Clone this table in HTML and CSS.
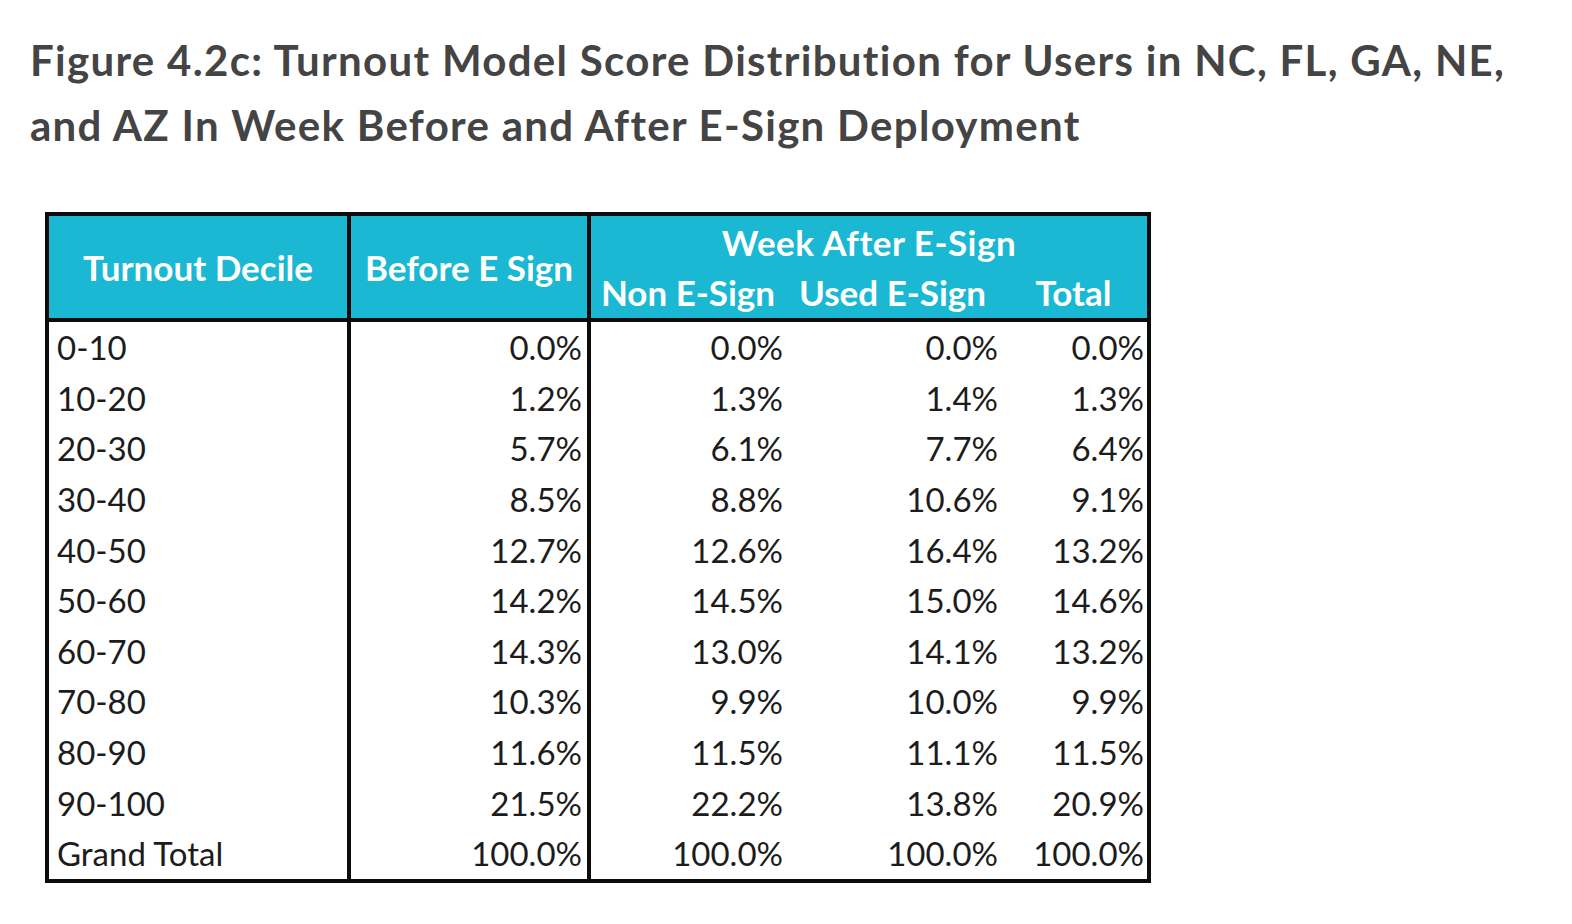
FILE: index.html
```html
<!DOCTYPE html>
<html lang="en">
<head>
<meta charset="utf-8">
<title>Figure 4.2c</title>
<link rel="stylesheet" href="styles.css">
</head>
<body>
<main class="page">
  <h1 class="title">Figure 4.2c: Turnout Model Score Distribution for Users in NC, FL, GA, NE, and AZ In Week Before and After E-Sign Deployment</h1>
  <table class="dist">
    <colgroup>
      <col class="c1"><col class="c2"><col class="c3"><col class="c4"><col class="c5">
    </colgroup>
    <thead>
      <tr class="h1">
        <th rowspan="2" class="sep">Turnout Decile</th>
        <th rowspan="2" class="sep">Before E Sign</th>
        <th colspan="3" class="group">Week After E-Sign</th>
      </tr>
      <tr class="h2">
        <th>Non E-Sign</th>
        <th>Used E-Sign</th>
        <th>Total</th>
      </tr>
    </thead>
    <tbody>
      <tr><td class="lbl sep">0-10</td><td class="sep n2">0.0%</td><td class="n3">0.0%</td><td class="n4">0.0%</td><td class="n5">0.0%</td></tr>
      <tr><td class="lbl sep">10-20</td><td class="sep n2">1.2%</td><td class="n3">1.3%</td><td class="n4">1.4%</td><td class="n5">1.3%</td></tr>
      <tr><td class="lbl sep">20-30</td><td class="sep n2">5.7%</td><td class="n3">6.1%</td><td class="n4">7.7%</td><td class="n5">6.4%</td></tr>
      <tr><td class="lbl sep">30-40</td><td class="sep n2">8.5%</td><td class="n3">8.8%</td><td class="n4">10.6%</td><td class="n5">9.1%</td></tr>
      <tr><td class="lbl sep">40-50</td><td class="sep n2">12.7%</td><td class="n3">12.6%</td><td class="n4">16.4%</td><td class="n5">13.2%</td></tr>
      <tr><td class="lbl sep">50-60</td><td class="sep n2">14.2%</td><td class="n3">14.5%</td><td class="n4">15.0%</td><td class="n5">14.6%</td></tr>
      <tr><td class="lbl sep">60-70</td><td class="sep n2">14.3%</td><td class="n3">13.0%</td><td class="n4">14.1%</td><td class="n5">13.2%</td></tr>
      <tr><td class="lbl sep">70-80</td><td class="sep n2">10.3%</td><td class="n3">9.9%</td><td class="n4">10.0%</td><td class="n5">9.9%</td></tr>
      <tr><td class="lbl sep">80-90</td><td class="sep n2">11.6%</td><td class="n3">11.5%</td><td class="n4">11.1%</td><td class="n5">11.5%</td></tr>
      <tr><td class="lbl sep">90-100</td><td class="sep n2">21.5%</td><td class="n3">22.2%</td><td class="n4">13.8%</td><td class="n5">20.9%</td></tr>
      <tr><td class="lbl sep">Grand Total</td><td class="sep n2">100.0%</td><td class="n3">100.0%</td><td class="n4">100.0%</td><td class="n5">100.0%</td></tr>
    </tbody>
  </table>
</main>
</body>
</html>
```

FILE: styles.css
```css
html, body {
  margin: 0;
  padding: 0;
  background: #ffffff;
}

.page {
  padding: 0 0 0 30px;
}

.title {
  margin: 0;
  padding-top: 28px;
  width: 1510px;
  font-family: Lato, "Open Sans", sans-serif;
  font-weight: 700;
  font-size: 42px;
  line-height: 65px;
  letter-spacing: 1.3px;
  color: #444444;
}

.dist {
  margin: 54px 0 0 15px;
  border-collapse: collapse;
  table-layout: fixed;
  width: 1102px;
  border: 4px solid #0c0c0c;
  font-family: Lato, "Open Sans", sans-serif;
  font-size: 33px;
  color: #1c1c1c;
}

.c1 { width: 302px; }
.c2 { width: 240px; }
.c3 { width: 196px; }
.c4 { width: 215px; }
.c5 { width: 149px; }

.dist thead {
  background: #1ab8d2;
  color: #ffffff;
  border-bottom: 4px solid #0c0c0c;
}

.dist th {
  font-weight: 700;
  font-size: 35px;
  padding: 0;
  text-align: center;
  white-space: nowrap;
}

.h1 th.group {
  height: 52px;
  vertical-align: middle;
  line-height: 40px;
  letter-spacing: 0.5px;
}

.h2 th {
  height: 50px;
  vertical-align: top;
  line-height: 48px;
}

.sep {
  border-right: 4px solid #0c0c0c;
}

.dist td {
  height: 50.6px;
  padding: 0;
  line-height: 50px;
  white-space: nowrap;
}

.lbl {
  text-align: left;
  padding-left: 8px !important;
}

.n2 { text-align: right; padding-right: 5px !important; }
.n3 { text-align: right; padding-right: 2px !important; }
.n4 { text-align: right; padding-right: 2px !important; }
.n5 { text-align: right; padding-right: 3px !important; }
```
